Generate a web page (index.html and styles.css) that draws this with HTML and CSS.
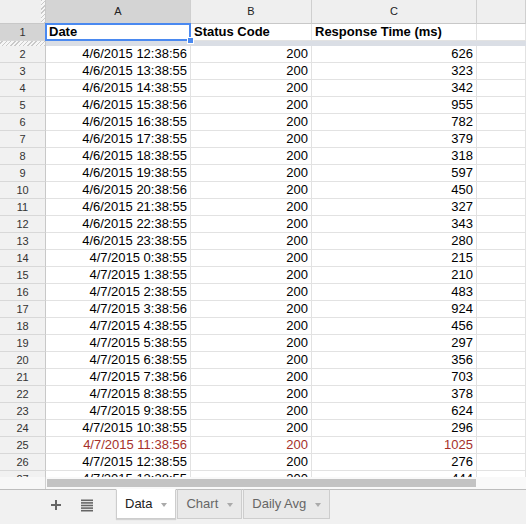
FILE: index.html
```html
<!DOCTYPE html>
<html>
<head>
<meta charset="utf-8">
<link rel="stylesheet" href="styles.css">
</head>
<body>
<div class="app">
  <div class="grid">
    <div class="row head">
      <div class="cell corner"></div>
      <div class="cell ch sel">A</div>
      <div class="cell ch">B</div>
      <div class="cell ch">C</div>
      <div class="cell ch"></div>
    </div>
    <div class="row">
      <div class="cell rh sel">1</div>
      <div class="cell hd active">Date</div>
      <div class="cell hd">Status Code</div>
      <div class="cell hd">Response Time (ms)</div>
      <div class="cell"></div>
    </div>
    <div class="row freeze">
      <div class="hatch"></div>
      <div class="band"></div>
    </div>
    <div class="row"><div class="cell rh">2</div><div class="cell">4/6/2015 12:38:56</div><div class="cell">200</div><div class="cell">626</div><div class="cell"></div></div>
    <div class="row"><div class="cell rh">3</div><div class="cell">4/6/2015 13:38:55</div><div class="cell">200</div><div class="cell">323</div><div class="cell"></div></div>
    <div class="row"><div class="cell rh">4</div><div class="cell">4/6/2015 14:38:55</div><div class="cell">200</div><div class="cell">342</div><div class="cell"></div></div>
    <div class="row"><div class="cell rh">5</div><div class="cell">4/6/2015 15:38:56</div><div class="cell">200</div><div class="cell">955</div><div class="cell"></div></div>
    <div class="row"><div class="cell rh">6</div><div class="cell">4/6/2015 16:38:55</div><div class="cell">200</div><div class="cell">782</div><div class="cell"></div></div>
    <div class="row"><div class="cell rh">7</div><div class="cell">4/6/2015 17:38:55</div><div class="cell">200</div><div class="cell">379</div><div class="cell"></div></div>
    <div class="row"><div class="cell rh">8</div><div class="cell">4/6/2015 18:38:55</div><div class="cell">200</div><div class="cell">318</div><div class="cell"></div></div>
    <div class="row"><div class="cell rh">9</div><div class="cell">4/6/2015 19:38:55</div><div class="cell">200</div><div class="cell">597</div><div class="cell"></div></div>
    <div class="row"><div class="cell rh">10</div><div class="cell">4/6/2015 20:38:56</div><div class="cell">200</div><div class="cell">450</div><div class="cell"></div></div>
    <div class="row"><div class="cell rh">11</div><div class="cell">4/6/2015 21:38:55</div><div class="cell">200</div><div class="cell">327</div><div class="cell"></div></div>
    <div class="row"><div class="cell rh">12</div><div class="cell">4/6/2015 22:38:55</div><div class="cell">200</div><div class="cell">343</div><div class="cell"></div></div>
    <div class="row"><div class="cell rh">13</div><div class="cell">4/6/2015 23:38:55</div><div class="cell">200</div><div class="cell">280</div><div class="cell"></div></div>
    <div class="row"><div class="cell rh">14</div><div class="cell">4/7/2015 0:38:55</div><div class="cell">200</div><div class="cell">215</div><div class="cell"></div></div>
    <div class="row"><div class="cell rh">15</div><div class="cell">4/7/2015 1:38:55</div><div class="cell">200</div><div class="cell">210</div><div class="cell"></div></div>
    <div class="row"><div class="cell rh">16</div><div class="cell">4/7/2015 2:38:55</div><div class="cell">200</div><div class="cell">483</div><div class="cell"></div></div>
    <div class="row"><div class="cell rh">17</div><div class="cell">4/7/2015 3:38:56</div><div class="cell">200</div><div class="cell">924</div><div class="cell"></div></div>
    <div class="row"><div class="cell rh">18</div><div class="cell">4/7/2015 4:38:55</div><div class="cell">200</div><div class="cell">456</div><div class="cell"></div></div>
    <div class="row"><div class="cell rh">19</div><div class="cell">4/7/2015 5:38:55</div><div class="cell">200</div><div class="cell">297</div><div class="cell"></div></div>
    <div class="row"><div class="cell rh">20</div><div class="cell">4/7/2015 6:38:55</div><div class="cell">200</div><div class="cell">356</div><div class="cell"></div></div>
    <div class="row"><div class="cell rh">21</div><div class="cell">4/7/2015 7:38:56</div><div class="cell">200</div><div class="cell">703</div><div class="cell"></div></div>
    <div class="row"><div class="cell rh">22</div><div class="cell">4/7/2015 8:38:55</div><div class="cell">200</div><div class="cell">378</div><div class="cell"></div></div>
    <div class="row"><div class="cell rh">23</div><div class="cell">4/7/2015 9:38:55</div><div class="cell">200</div><div class="cell">624</div><div class="cell"></div></div>
    <div class="row"><div class="cell rh">24</div><div class="cell">4/7/2015 10:38:55</div><div class="cell">200</div><div class="cell">296</div><div class="cell"></div></div>
    <div class="row red"><div class="cell rh">25</div><div class="cell">4/7/2015 11:38:56</div><div class="cell">200</div><div class="cell">1025</div><div class="cell"></div></div>
    <div class="row"><div class="cell rh">26</div><div class="cell">4/7/2015 12:38:55</div><div class="cell">200</div><div class="cell">276</div><div class="cell"></div></div>
    <div class="row"><div class="cell rh">27</div><div class="cell">4/7/2015 13:38:55</div><div class="cell">200</div><div class="cell">444</div><div class="cell"></div></div>
  </div>
  <div class="hscroll">
    <div class="hs-left"></div>
    <div class="hs-track"><div class="hs-thumb"></div></div>
  </div>
  <div class="tabbar">
    <svg class="ico-plus" width="10" height="10" viewBox="0 0 10 10"><rect x="4" y="0" width="2" height="10" fill="#666"/><rect x="0" y="4" width="10" height="2" fill="#666"/></svg>
    <svg class="ico-list" width="12" height="13" viewBox="0 0 12 13"><rect x="0" y="0.5" width="12" height="1.6" fill="#666"/><rect x="0" y="3.1" width="12" height="1.6" fill="#666"/><rect x="0" y="5.7" width="12" height="1.6" fill="#666"/><rect x="0" y="8.3" width="12" height="1.6" fill="#666"/><rect x="0" y="10.9" width="12" height="1.6" fill="#666"/></svg>
    <div class="tab on"><span>Data</span><i class="caret"></i></div>
    <div class="tab"><span>Chart</span><i class="caret"></i></div>
    <div class="tab"><span>Daily Avg</span><i class="caret"></i></div>
  </div>
</div>
</body>
</html>
```
FILE: styles.css
```css
html, body {
  margin: 0;
  padding: 0;
  background: #fff;
}
body {
  font-family: "Liberation Sans", Arial, sans-serif;
  width: 526px;
  height: 524px;
  overflow: hidden;
}
.app {
  display: flex;
  flex-direction: column;
  height: 524px;
}
.grid {
  height: 477px;
  overflow: hidden;
  flex: none;
}
.row {
  display: grid;
  grid-template-columns: 46px 145px 121px 165px 1fr;
  height: 17px;
}
.cell {
  box-sizing: border-box;
  border-right: 1px solid #e2e2e2;
  border-bottom: 1px solid #e2e2e2;
  font-size: 13px;
  line-height: 16px;
  padding: 0 3px;
  white-space: nowrap;
  overflow: hidden;
  text-align: right;
  color: #000;
}
.rh {
  background: #f1f1f1;
  border-right-color: #c8c8c8;
  border-bottom-color: #d8d8d8;
  text-align: center;
  font-size: 11px;
  color: #333;
  padding: 0;
}
.rh.sel {
  background: #d4d4d4;
}
.head {
  height: 24px;
}
.ch {
  background: #efefef;
  border-right-color: #cfcfcf;
  border-bottom-color: #c8c8c8;
  text-align: center;
  font-size: 11px;
  line-height: 23px;
  color: #222;
  padding: 0;
}
.ch.sel {
  background: #d4d4d4;
}
.corner {
  padding: 0;
  border-right-color: #c8c8c8;
  border-bottom-color: #c8c8c8;
  background:
    repeating-linear-gradient(-45deg, #c9c9c9 0 1px, #f6f6f6 1px 3px) right top / 4px 100% no-repeat,
    #efefef;
}
.hd {
  font-weight: bold;
  text-align: left;
  padding-left: 3px;
  color: #000;
}
.active {
  position: relative;
  overflow: visible;
}
.active::before {
  content: "";
  position: absolute;
  left: -1px;
  top: -1px;
  right: -1px;
  bottom: -1px;
  border: 2px solid #4a89f0;
}
.active::after {
  content: "";
  position: absolute;
  right: -4px;
  bottom: -4px;
  width: 5px;
  height: 5px;
  background: #4a89f0;
  border: 1px solid #fff;
  z-index: 2;
}
.freeze {
  height: 5px;
  grid-template-columns: 46px 1fr;
}
.hatch {
  box-sizing: border-box;
  border-right: 1px solid #c8c8c8;
  background: repeating-linear-gradient(-45deg, #c9c9c9 0 1px, #f6f6f6 1px 3px);
}
.band {
  background: #dadee5;
}
.red .cell {
  color: #a5302a;
}
.red .rh {
  color: #333;
}
.hscroll {
  flex: none;
  height: 12px;
  border-bottom: 1px solid #bdbdbd;
  display: flex;
  background: #f9f9f9;
}
.hs-left {
  width: 46px;
  box-sizing: border-box;
  border-right: 1px solid #d0d0d0;
  background: #f7f7f7;
}
.hs-track {
  flex: 1;
  padding: 2px 0 0 1px;
}
.hs-thumb {
  width: 429px;
  height: 8px;
  background: #c3c3c3;
}
.tabbar {
  flex: 1;
  background: #f1f1f1;
  display: flex;
  align-items: flex-start;
}
.ico-plus {
  margin: 10px 0 0 51px;
  flex: none;
}
.ico-list {
  margin: 9px 0 0 20px;
  flex: none;
}
.tab {
  box-sizing: border-box;
  margin-top: -1px;
  height: 30px;
  border: 1px solid #cdcdcd;
  border-top-color: #bdbdbd;
  background: #e9e9e9;
  display: flex;
  align-items: center;
  padding: 0 8px 1px 8px;
  font-size: 13px;
  color: #666;
  margin-left: 1px;
}
.tab.on {
  margin-left: 23px;
  background: #fff;
  color: #222;
  border-top-color: #fff;
  box-shadow: 0 1px 1px rgba(0,0,0,0.12);
}
.caret {
  display: block;
  width: 0;
  height: 0;
  margin-left: 9px;
  margin-top: 2px;
  border-left: 3.5px solid transparent;
  border-right: 3.5px solid transparent;
  border-top: 4px solid #aaa;
}
```
